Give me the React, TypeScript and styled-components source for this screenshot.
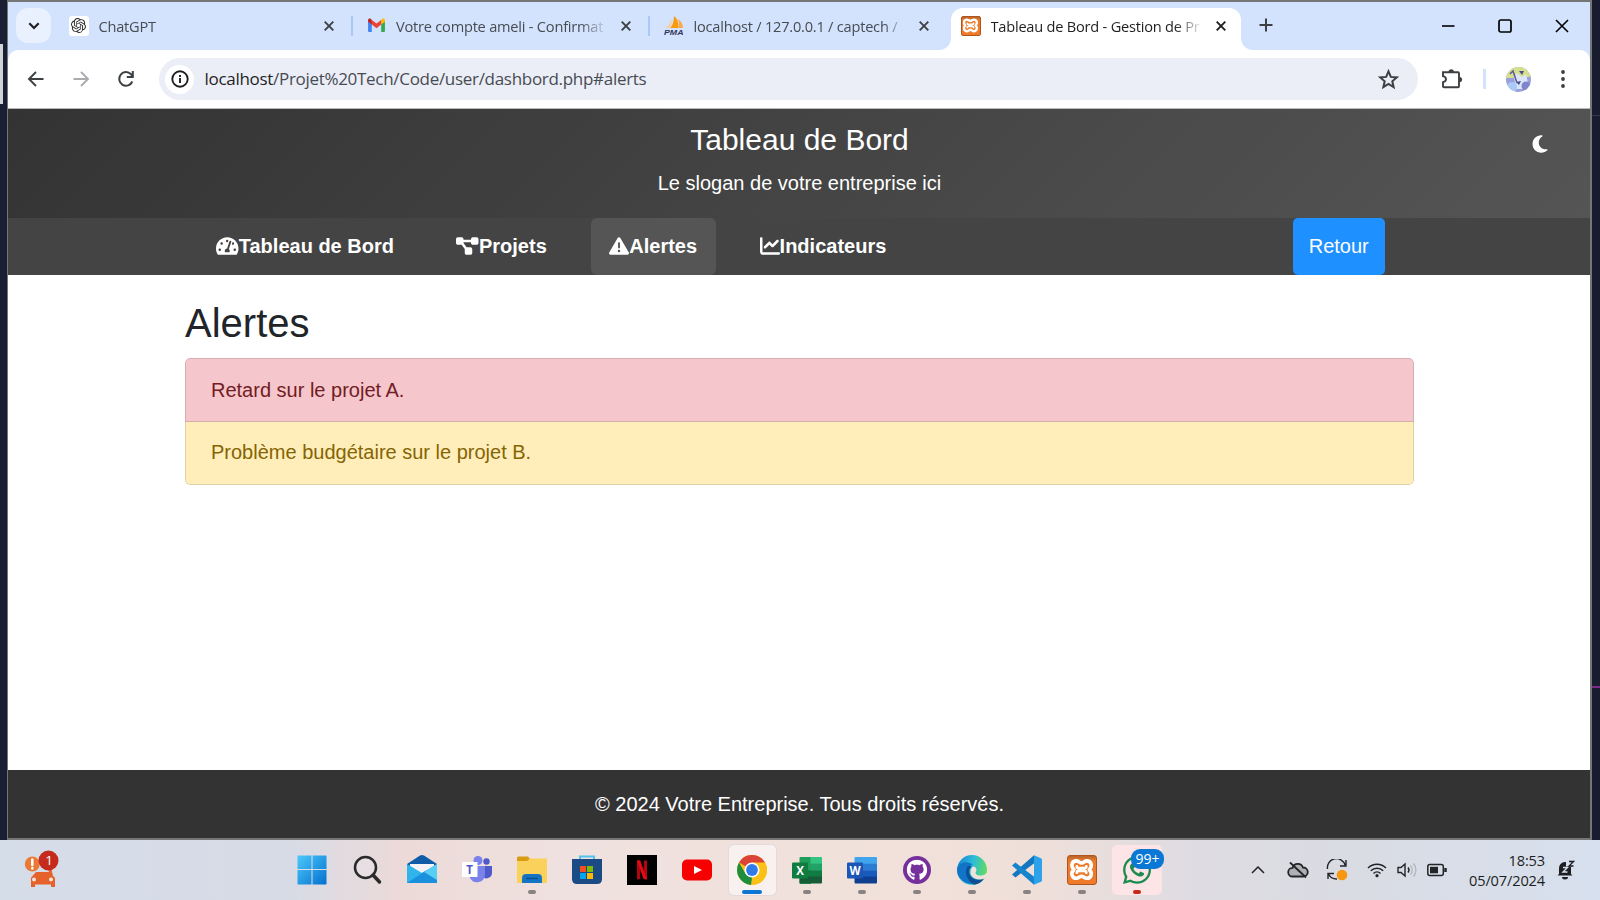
import React from "react";
import styled, { createGlobalStyle, css } from "styled-components";
import { SiOpenai } from "react-icons/si";
import { FaTachometerAlt, FaGithub, FaWhatsapp } from "react-icons/fa";
import { FaDiagramProject, FaTriangleExclamation, FaChartLine, FaMoon } from "react-icons/fa6";

const SEGOE = `"Open Sans", "Noto Sans", sans-serif`;
const ARIAL = `"Liberation Sans", Arial, sans-serif`;

const Global = createGlobalStyle`
  *, *::before, *::after { box-sizing: border-box; }
  body { margin: 0; background: #1b1e31; overflow: hidden; }
  svg { display: block; flex: none; }
`;

/* ---------- Desktop ---------- */
const Desktop = styled.div`
  display: flex;
  flex-direction: column;
  width: 1600px;
  height: 900px;
  font-family: ${SEGOE};
`;
const Workspace = styled.div`
  display: flex;
  height: 840px;
`;
const LeftEdge = styled.div`
  width: 7px;
  padding-top: 44px;
  background: #1a1e32;
`;
const LeftHandle = styled.div`
  width: 3px;
  height: 60px;
  background: #d0d4d8;
`;
const RightEdge = styled.div`
  flex: 1;
  padding-top: 115px;
  background: #191c2e;
`;
const EdgeLine = styled.div<{ $color: string; $gap?: number }>`
  height: ${(p) => (p.$gap ? 2 : 1)}px;
  margin-top: ${(p) => p.$gap ?? 0}px;
  background: ${(p) => p.$color};
`;
const BrowserWindow = styled.div`
  display: flex;
  flex-direction: column;
  width: 1585px;
  border: solid #757676;
  border-width: 2px 2px 2px 1px;
  background: #fff;
`;

/* ---------- Tab strip ---------- */
const TabStrip = styled.div`
  display: flex;
  height: 48px;
  padding-left: 8px;
  background: #d3e3fd;
`;
const TabSearch = styled.div`
  display: flex;
  align-items: center;
  justify-content: center;
  width: 35px;
  height: 35px;
  margin: 6px 4px 0 0;
  border-radius: 12px;
  background: #e9f0fe;
`;
const Tab = styled.div<{ $active?: boolean }>`
  position: relative;
  display: flex;
  align-items: center;
  width: 297.5px;
  height: 48px;
  padding: 0 0 1px 13.5px;
  color: #474b52;
  ${(p) =>
    p.$active &&
    css`
      width: 290px;
      height: 42px;
      margin: 6px 0 0 3px;
      padding: 0 0 7px 10px;
      border-radius: 12px 12px 0 0;
      background: #fff;
      color: #1f1f1f;
      &::before,
      &::after {
        content: "";
        position: absolute;
        bottom: 0;
        width: 12px;
        height: 12px;
      }
      &::before {
        left: -12px;
        background: radial-gradient(circle at 0 0, transparent 11.5px, #fff 12.5px);
      }
      &::after {
        right: -12px;
        background: radial-gradient(circle at 100% 0, transparent 11.5px, #fff 12.5px);
      }
    `}
`;
const Favicon = styled.div<{ $card?: boolean }>`
  display: flex;
  align-items: center;
  justify-content: center;
  width: 20px;
  height: 20px;
  margin-right: 10px;
  border-radius: 3px;
  background: ${(p) => (p.$card ? "#fff" : "transparent")};
  flex: none;
`;
const TabTitle = styled.div<{ $fade: number }>`
  width: 212px;
  margin-right: 13px;
  padding-top: 1px;
  white-space: nowrap;
  font-size: 14.6px;
  line-height: 22px;
  letter-spacing: -0.22px;
  mask-image: linear-gradient(90deg, #000 ${(p) => p.$fade}px, transparent 212px);
`;
const TabDivider = styled.div`
  width: 2px;
  height: 20px;
  margin-left: auto;
  background: #a8c7fa;
`;
const NewTab = styled.div`
  display: flex;
  align-items: center;
  margin-left: 18px;
  padding-bottom: 2px;
`;
const WindowButtons = styled.div`
  display: flex;
  align-items: center;
  gap: 43px;
  margin-left: auto;
  padding-right: 21px;
`;

/* ---------- Toolbar ---------- */
const ToolbarBack = styled.div`
  background: #d3e3fd;
`;
const Toolbar = styled.div`
  display: flex;
  align-items: center;
  height: 58px;
  padding: 0 24px 0 18px;
  border-radius: 10px 10px 0 0;
  background: #fff;
`;
const NavButtons = styled.div`
  display: flex;
  gap: 25px;
  width: 133px;
`;
const Omnibox = styled.div`
  display: flex;
  align-items: center;
  width: 1259px;
  height: 42px;
  padding: 0 19.5px 0 6px;
  border-radius: 21px;
  background: #ebeef7;
`;
const SiteInfo = styled.div`
  display: flex;
  align-items: center;
  justify-content: center;
  width: 29px;
  height: 29px;
  border-radius: 50%;
  background: #fff;
`;
const Url = styled.div`
  flex: 1;
  margin-left: 10.5px;
  color: #474b52;
  font-size: 17px;
  line-height: 24px;
  letter-spacing: -0.3px;
  white-space: nowrap;
`;
const Host = styled.span`
  color: #1f1f1f;
`;
const ToolbarRight = styled.div`
  display: flex;
  align-items: center;
  margin-left: auto;
`;
const ToolbarDivider = styled.div`
  width: 3px;
  height: 20px;
  margin: 0 20px;
  background: #d3e3fd;
`;
const MenuDots = styled.div`
  margin-left: 29px;
`;

/* ---------- Page ---------- */
const Page = styled.div`
  display: flex;
  flex: 1;
  flex-direction: column;
  border-top: 1px solid #b9baba;
  background: #fff;
  font-family: ${ARIAL};
  font-size: 20px;
  line-height: 30px;
`;
const Header = styled.header`
  position: relative;
  height: 109px;
  padding: 13px 0 0 1px;
  background: linear-gradient(135deg, #333, #555);
  color: #fff;
  text-align: center;
`;
const HeaderTitle = styled.h1`
  margin: 0 0 10px;
  font-size: 30px;
  font-weight: 400;
  line-height: 36px;
`;
const Slogan = styled.p`
  margin: 0;
`;
const ThemeToggle = styled.div`
  position: absolute;
  top: 25px;
  right: 40px;
`;
const NavBar = styled.nav`
  display: flex;
  gap: 25px;
  height: 57px;
  padding: 0 205px 0 189.5px;
  background: #444;
  color: #fff;
`;
const NavItem = styled.div<{ $active?: boolean }>`
  display: flex;
  align-items: center;
  padding: 0 18.75px 1px;
  border-radius: 6px;
  background: ${(p) => (p.$active ? "#555" : "transparent")};
  font-weight: 700;
`;
const BackButton = styled.div`
  display: flex;
  align-items: center;
  justify-content: center;
  width: 92.5px;
  margin-left: auto;
  padding-bottom: 1px;
  border-radius: 5px;
  background: #1e90ff;
`;
const Content = styled.main`
  flex: 1;
  padding: 24px 176px 0 177px;
`;
const Heading = styled.h2`
  margin: 0 0 11px;
  color: #212529;
  font-size: 40px;
  font-weight: 400;
  line-height: 48px;
`;
const AlertList = styled.div`
  overflow: hidden;
  border-radius: 5px;
`;
const AlertRow = styled.div<{ $kind: "danger" | "warning" }>`
  height: ${(p) => (p.$kind === "danger" ? 64 : 63)}px;
  padding: ${(p) => (p.$kind === "danger" ? 16 : 15)}px 25px 0;
  border: 1px solid rgba(0, 0, 0, 0.125);
  border-top-width: ${(p) => (p.$kind === "danger" ? 1 : 0)}px;
  border-radius: ${(p) => (p.$kind === "danger" ? "5px 5px 0 0" : "0 0 5px 5px")};
  background: ${(p) => (p.$kind === "danger" ? "#f5c6cb" : "#ffeeba")};
  color: ${(p) => (p.$kind === "danger" ? "#721c24" : "#856404")};
`;
const Footer = styled.footer`
  height: 68px;
  padding: 19px 0 0 1px;
  background: #333;
  color: #fff;
  text-align: center;
`;

/* ---------- Taskbar ---------- */
const Taskbar = styled.div`
  display: flex;
  align-items: center;
  height: 60px;
  background: linear-gradient(
    90deg,
    #d5dde9 0,
    #d7dbe6 290px,
    #ecdad8 400px,
    #efe1df 560px,
    #f1e1da 900px,
    #efdfd9 1040px,
    #dedce2 1190px,
    #dadbe2 1320px,
    #d7e0ee 1600px
  );
`;
const Widget = styled.div`
  width: 260px;
  padding: 0 0 5px 24px;
`;
const Apps = styled.div`
  display: flex;
  margin-left: 24.5px;
  width: 880px;
`;
const AppCell = styled.div`
  display: flex;
  justify-content: center;
  width: 55px;
`;
const AppTile = styled.div<{ $tile?: "active" | "alert" }>`
  position: relative;
  display: flex;
  flex-direction: column;
  align-items: center;
  width: ${(p) => (p.$tile === "alert" ? 50 : 47)}px;
  height: 50px;
  padding-top: 10px;
  border-radius: 5px;
  background: ${(p) => (p.$tile === "active" ? "#f8f1ef" : p.$tile === "alert" ? "#fde4e6" : "transparent")};
  box-shadow: ${(p) => (p.$tile === "active" ? "0 0 1px 1px #e6d9d7" : "none")};
`;
const Indicator = styled.div<{ $color: string; $wide?: boolean }>`
  width: ${(p) => (p.$wide ? 20 : 8)}px;
  height: 4px;
  margin-top: 5px;
  border-radius: 2px;
  background: ${(p) => p.$color};
`;
const CountBadge = styled.div`
  position: absolute;
  top: 4px;
  left: 19px;
  width: 33px;
  height: 20px;
  border-radius: 9px;
  background: #0a78d4;
  color: #fff;
  font-size: 14px;
  line-height: 20px;
  text-align: center;
`;
const Tray = styled.div`
  display: flex;
  align-items: center;
  margin-left: auto;
  padding-right: 25px;
`;
const TrayIcon = styled.div<{ $w: number; $gap: number }>`
  width: ${(p) => p.$w}px;
  margin-right: ${(p) => p.$gap}px;
`;
const Clock = styled.div`
  width: 91px;
  margin-right: 12px;
  color: #1c1e22;
  font-size: 14.6px;
  line-height: 20px;
  letter-spacing: -0.15px;
  text-align: right;
`;

/* ---------- Small drawings ---------- */
const Cross = ({ s = 10, w = 1.9, c = "#3c4043" }) => (
  <svg width={s} height={s} viewBox="0 0 10 10" fill="none" stroke={c} strokeWidth={w}>
    <path d="M.7.7l8.6 8.6M9.3.7L.7 9.3" />
  </svg>
);
const GmailIcon = () => (
  <svg width="19" height="15" viewBox="0 0 20 16">
    <path d="M1 3v10.5c0 .8.5 1.3 1.3 1.3H5V6z" fill="#4285f4" />
    <path d="M19 3v10.5c0 .8-.5 1.3-1.300 1.3H15V6z" fill="#34a853" />
    <path d="M15 2v5l4-3V2.500C19 .8 17.200.2 16 1z" fill="#fbbc04" />
    <path d="M5 7V2l5 3.800L15 2v5l-5 3.800z" fill="#ea4335" />
    <path d="M1 2.500V4l4 3V2L4 1C2.800.2 1 .8 1 2.500z" fill="#c5221f" />
  </svg>
);
const PmaIcon = () => (
  <svg width="20" height="20" viewBox="0 0 20 20">
    <path d="M7.500 2v10H1.500C4.500 10 6.500 6 7.500 2z" fill="#f7cfa6" />
    <path d="M10 0c4 3 5 8 4.500 12H6.500c2.500-3 3.500-8 3.500-12z" fill="#f89c0e" />
    <path d="M14 3c3.500 2 5 5.500 5 9h-4.500c1-3 .8-6-.5-9z" fill="#fba94a" />
    <text x="0" y="19" fontFamily={ARIAL} fontSize="7.5" fontWeight="700" fontStyle="italic" fill="#33335c" textLength="19.5" lengthAdjust="spacingAndGlyphs">
      PMA
    </text>
  </svg>
);
const XamppBox = styled.div<{ $s: number }>`
  display: flex;
  align-items: center;
  justify-content: center;
  width: ${(p) => p.$s}px;
  height: ${(p) => p.$s}px;
  border: 1px solid #b0561a;
  border-radius: ${(p) => p.$s / 10}px;
  background: linear-gradient(#b9622a, #d9772f 12%, #ee7b2b 22%, #ee7b2b);
  flex: none;
`;
const XamppIcon = ({ s }: { s: number }) => (
  <XamppBox $s={s}>
    <svg width={s * 0.84} height={s * 0.84} viewBox="0 0 24 24" fill="none" strokeLinejoin="round">
      <path
        d="M4.700 12C1 8.500 3 3.700 7 3.700c2.300 0 3 2 5 2s2.700-2 5-2c4 0 6 4.800 2.300 8.300 3.700 3.500 1.700 8.300-2.300 8.300-2.300 0-3-2-5-2s-2.700 2-5 2c-4 0-6-4.800-2.300-8.300z"
        stroke="#fff"
        strokeWidth="3.4"
      />
      <path d="M7.500 9c0 1.200.8 1.700 2 1.700h5c1.200 0 2-.5 2-1.700M7.500 15c0-1.200.8-1.700 2-1.700h5c1.200 0 2 .5 2 1.700" stroke="#fff" strokeWidth="2.600" strokeLinecap="round" />
    </svg>
  </XamppBox>
);
const InfoIcon = () => (
  <svg width="18" height="18" viewBox="0 0 18 18" fill="none" stroke="#1f1f1f" strokeWidth="1.900">
    <circle cx="9" cy="9" r="7.700" />
    <path d="M9 8v5M9 5v2" />
  </svg>
);
const Arrow = ({ c, flip }: { c: string; flip?: boolean }) => (
  <svg width="20" height="20" viewBox="0 0 20 20" fill="none" stroke={c} strokeWidth="1.900" transform={flip ? "scale(-1 1)" : undefined}>
    <path d="M17.500 10H3.500M10 3l-7 7 7 7" />
  </svg>
);
const Reload = () => (
  <svg width="20" height="20" viewBox="0 0 20 20" fill="none" stroke="#3c4043" strokeWidth="2">
    <path d="M16.300 12.500a6.800 6.800 0 1 1-1.300-7.200l2 2.200" />
    <path d="M16.800 2v6h-6" />
  </svg>
);
const Star = () => (
  <svg width="21" height="21" viewBox="0 0 20 20" fill="none" stroke="#3c4043" strokeWidth="1.900">
    <path d="M10 2.200l2.200 5.300 5.700.5-4.300 3.700 1.300 5.600-4.900-3-4.900 3 1.300-5.600L2.100 8l5.700-.5z" />
  </svg>
);
const Puzzle = () => (
  <svg width="22" height="22" viewBox="0 0 22 22">
    <path d="M2 4.200h15a1 1 0 0 1 1 1v13a1 1 0 0 1-1 1H3a1 1 0 0 1-1-1v-4c4-1 4-5 0-6z" fill="none" stroke="#3c4043" strokeWidth="1.900" />
    <path d="M7.500 4a2.700 2.700 0 0 1 5.400 0zM18.500 9a2.600 2.600 0 0 1 0 5.200z" fill="#3c4043" />
  </svg>
);
const Avatar = () => (
  <svg width="25" height="25" viewBox="0 0 25 25">
    <clipPath id="avatar"><circle cx="12.500" cy="12.500" r="12.500" /></clipPath>
    <g clipPath="url(#avatar)">
      <path d="M0 0h25v25H0z" fill="#9aa0dc" />
      <path d="M0 0h25v9l-6 2H0z" fill="#d5df8c" />
      <path d="M8 10l3-4 5 4 4-3 2 9-5 6h-7z" fill="#dce4f7" />
      <circle cx="6" cy="20" r="5" fill="#a9c9f6" />
      <circle cx="20" cy="19" r="4.500" fill="#7f85cc" />
      <path d="M4 7l3-3 4 12" fill="none" stroke="#5a5a9a" strokeWidth="1.500" />
      <path d="M13 4h5l-2 4zM10 15l5-1-2 4z" fill="#4c4c95" />
    </g>
  </svg>
);
const TrafficIcon = () => (
  <svg width="38" height="40" viewBox="0 0 38 40">
    <path d="M8.500 28l3.500-4h13L22 15h4l3 13q2.500 1 2 5v6h-4v-2.500H11V39H7v-6q-.5-4 1.500-5z" fill="#e5622a" />
    <circle cx="10" cy="31.500" r="2" fill="#f7e4dc" />
    <circle cx="27" cy="31.500" r="2" fill="#f7e4dc" />
    <circle cx="8.300" cy="16" r="7.500" fill="#eb7935" />
    <path d="M8.300 11.500v5.500M8.300 20v.6" stroke="#fff" strokeWidth="2.500" strokeLinecap="round" />
    <circle cx="24.500" cy="12.500" r="10" fill="#c42b1c" />
    <text x="25" y="17" textAnchor="middle" fontFamily={SEGOE} fontSize="13.500" fill="#fff">1</text>
  </svg>
);
const Svg30 = ({ children }: { children: React.ReactNode }) => (
  <svg width="30" height="30" viewBox="0 0 30 30">{children}</svg>
);
const StartIcon = () => (
  <Svg30>
    <linearGradient id="win" x1="0" y1="0" x2="1" y2="1" gradientUnits="objectBoundingBox">
      <stop offset="0" stopColor="#4cc9fb" /><stop offset="1" stopColor="#0470cf" />
    </linearGradient>
    <path d="M1 .5h13.500V14H.5V1zM15.500.5H29l.5.5v13h-14zM.5 15h14v14.500H1L.5 29zM15.500 15h14v14l-.5.5H15.500z" fill="url(#win)" />
  </Svg30>
);
const SearchIcon = () => (
  <Svg30>
    <circle cx="13.500" cy="12.500" r="10.500" fill="#e7dfe3" stroke="#2b2a2b" strokeWidth="2.500" />
    <path d="M21 20l6.500 7" stroke="#2b2a2b" strokeWidth="3.500" strokeLinecap="round" />
  </Svg30>
);
const MailIcon = () => (
  <Svg30>
    <path d="M0 9L13 .6q2-1.200 4 0L30 9v6H0z" fill="#0f5ba8" />
    <path d="M3 9h24v10H3z" fill="#f4f2f4" />
    <path d="M0 9l15 9L30 9v19H0z" fill="#2fb4ec" />
    <path d="M0 28L19 15.500 30 24v4z" fill="#1b90dc" />
    <path d="M30 9v16L17 17z" fill="#57cff5" />
  </Svg30>
);
const TeamsIcon = () => (
  <Svg30>
    <circle cx="16" cy="5.500" r="4.500" fill="#7b83eb" />
    <circle cx="24.500" cy="6.500" r="3.200" fill="#5059c9" />
    <path d="M20 11h10v7a5.500 5.500 0 0 1-10 3z" fill="#5059c9" />
    <path d="M9 11h14v9a8 8 0 0 1-15 3z" fill="#7b83eb" />
    <path d="M0 7h15.500v15H0z" fill="#fff" />
    <text x="7.700" y="18.800" textAnchor="middle" fontFamily={SEGOE} fontWeight="700" fontSize="11.500" fill="#5059c9">T</text>
  </Svg30>
);
const FolderIcon = () => (
  <Svg30>
    <path d="M0 3q0-1.500 1.500-1.500H11L13 4v5H0z" fill="#d89b14" />
    <path d="M0 6h10l3-2.500h17V27q0 1-1 1H1q-1 0-1-1z" fill="#fad15a" />
    <path d="M5 28v-5q0-4 4-4h12q4 0 4 4v5z" fill="#1474c4" />
    <path d="M9 23.500h12" stroke="#0b4f91" strokeWidth="1.500" />
  </Svg30>
);
const StoreIcon = () => (
  <Svg30>
    <path d="M8 6V1.500h14V6" fill="none" stroke="#50c3ee" strokeWidth="2" />
    <path d="M0 4h30v20q0 5-5 5H5q-5 0-5-5z" fill="#1a4b84" />
    <path d="M8 11h6v6H8z" fill="#f25022" /><path d="M15 11h6v6h-6z" fill="#7fba00" />
    <path d="M8 18h6v6H8z" fill="#00a4ef" /><path d="M15 18h6v6h-6z" fill="#ffb900" />
  </Svg30>
);
const NetflixIcon = () => (
  <Svg30>
    <path d="M0 0h30v30H0z" fill="#000" />
    <path d="M10 5.500h3.200V24l-3.200.5zM16.800 5.500H20v19l-3.200-.5z" fill="#b1060f" />
    <path d="M10 5.500h3.200L20 24.500l-3.400-.5z" fill="#e50914" />
  </Svg30>
);
const YoutubeIcon = () => (
  <Svg30>
    <rect y="4.500" width="30" height="21" rx="5" fill="#f60000" />
    <path d="M12 11l8 4-8 4z" fill="#fff" />
  </Svg30>
);
const ChromeIcon = () => (
  <Svg30>
    <circle cx="15" cy="15" r="15" fill="#fbc116" />
    <path d="M15 15L2 7.500a15 15 0 0 1 26 0z" fill="#db4437" />
    <path d="M2 7.500l6.500 11.200L15 22.500l-1 7.400A15 15 0 0 1 2 7.500z" fill="#1e8e3e" />
    <path d="M28 7.500H15v7.500l6.500 3.700L15 30a15 15 0 0 0 13-22.500z" fill="#fbc116" />
    <circle cx="15" cy="15" r="7.500" fill="#fff" />
    <circle cx="15" cy="15" r="5.900" fill="#2f7be8" />
  </Svg30>
);
const WordIcon = () => (
  <Svg30>
    <path d="M7.500 3q0-1 1-1H29q1 0 1 1v6H7.500z" fill="#41a5ee" />
    <path d="M7.500 8.700H30v7H7.500z" fill="#2b7cd3" />
    <path d="M7.500 15.300H30v7H7.500z" fill="#185abd" />
    <path d="M7.500 21.500H30v6q0 1-1 1H8.500q-1 0-1-1z" fill="#103f91" />
    <rect x="0" y="7.500" width="16" height="16" rx="1" fill="#1b55b5" />
    <text x="8" y="19.800" textAnchor="middle" fontFamily={SEGOE} fontWeight="700" fontSize="11.500" fill="#fff">W</text>
  </Svg30>
);
const ExcelIcon = () => (
  <Svg30>
    <path d="M7.500 3q0-1 1-1H19v27H8.500q-1 0-1-1z" fill="#1f9d5b" />
    <path d="M18.500 2H29q1 0 1 1v6H18.500z" fill="#33c481" />
    <path d="M18.500 8.700H30v7H18.500z" fill="#21a366" />
    <path d="M7.500 15.300h11v7h-11zM18.500 15.300H30v7H18.500z" fill="#107c41" />
    <path d="M7.500 21.500H30v6q0 1-1 1H8.500q-1 0-1-1z" fill="#185c37" />
    <rect x="0" y="7.500" width="16" height="16" rx="1" fill="#107c41" />
    <text x="8" y="19.800" textAnchor="middle" fontFamily={SEGOE} fontWeight="700" fontSize="11.500" fill="#fff">X</text>
  </Svg30>
);
const GithubDesktopIcon = () => (
  <Svg30>
    <circle cx="15" cy="15" r="14" fill="#76309b" />
    <FaGithub x={4.5} y={4.5} size={21} color="#fff" />
  </Svg30>
);
const EdgeIcon = () => (
  <Svg30>
    <linearGradient id="edgeTop" x1="0" y1=".3" x2="1" y2=".5">
      <stop offset="0" stopColor="#1585d3" /><stop offset=".5" stopColor="#2dbcd8" /><stop offset="1" stopColor="#62dd5c" />
    </linearGradient>
    <circle cx="15" cy="15" r="15" fill="url(#edgeTop)" />
    <path d="M0 14C2 7 11 5 16 10c-5 0-7 5-4 10 3 5 10 6 15 3A15 15 0 0 1 0 14z" fill="#1274c7" />
    <path d="M11 11c-4 5-2 14 6 18.800A15 15 0 0 0 27.500 23c-5 3-12 2-14.500-3-1.500-4-.5-7 2-9z" fill="#0d4f95" />
    <path d="M16 11.500c3 0 4 3 3 5-1.500 2 1 4.500 5 4 3 0 5-1.500 6-3v4l-2.500 2c-6 2.500-14-.5-14-6 0-3 1-5 2.500-6z" fill="#efe2dc" />
  </Svg30>
);
const VsCodeIcon = () => (
  <Svg30>
    <path d="M22 .3L0 19.500l3.500 3L22.500 8z" fill="#1277be" />
    <path d="M22 29.700L0 10.500l3.500-3L22.500 22z" fill="#1584cc" />
    <path d="M22 .3l7 3q1 .5 1 1.500v20.400q0 1-1 1.500l-7 3z" fill="#2da2ea" />
  </Svg30>
);
const WhatsappIcon = () => (
  <svg width="32" height="30" viewBox="0 0 32 30">
    <FaWhatsapp x={0} y={-1} size={32} color="#1d8a4e" />
  </svg>
);

/* ---------- Tray drawings ---------- */
const stroke = { fill: "none", stroke: "#222428", strokeWidth: 1.5 };
const ChevronUp = () => (
  <svg width="14" height="8" viewBox="0 0 14 8" {...stroke}><path d="M1 7l6-6 6 6" /></svg>
);
const CloudOff = () => (
  <svg width="22" height="18" viewBox="0 0 22 18" {...stroke} strokeWidth="1.800">
    <path d="M5.500 15.500a4.300 4.300 0 0 1 0-8.600A5.500 5.500 0 0 1 16 6.500a4.500 4.500 0 0 1 .5 9z" fill="#b0b0b4" />
    <path d="M3 1.500l16 15" />
  </svg>
);
const SyncIcon = () => (
  <svg width="22" height="22" viewBox="0 0 22 22" {...stroke} strokeWidth="1.400">
    <path d="M1.500 10A9 9 0 0 1 19 6M20 1v6h-6M2 20v-5.500h6M2.500 15A9 9 0 0 0 11 20" />
    <circle cx="16" cy="16" r="5.300" fill="#f7960f" stroke="none" />
  </svg>
);
const WifiIcon = () => (
  <svg width="20" height="16" viewBox="0 0 20 16" {...stroke}>
    <path d="M1 6a12.600 12.600 0 0 1 18 0M3.800 8.800a8.800 8.800 0 0 1 12.400 0M6.500 11.500a5 5 0 0 1 7 0" />
    <circle cx="10" cy="13.700" r="1.600" fill="#222428" stroke="none" />
  </svg>
);
const VolumeIcon = () => (
  <svg width="21" height="16" viewBox="0 0 21 16" {...stroke} strokeWidth="1.400">
    <path d="M1 5.500h3L8 2v12l-4-3.500H1z" />
    <path d="M11 5.500a4 4 0 0 1 0 5" />
    <path d="M13.500 3.500a7 7 0 0 1 0 9M16.500 1.500a10 10 0 0 1 0 13" stroke="#b4b6bc" />
  </svg>
);
const BatteryIcon = () => (
  <svg width="20" height="14" viewBox="0 0 20 14" {...stroke}>
    <rect x=".8" y="1.500" width="15.500" height="11" rx="2" />
    <path d="M3 3.800h8v6.500H3z" fill="#222428" stroke="none" />
    <path d="M18.500 5v4" strokeWidth="2.500" />
  </svg>
);
const BellIcon = () => (
  <svg width="18" height="20" viewBox="0 0 18 20">
    <path d="M2 14V8.500a6 6 0 0 1 6-6.500h1v4.500h5V14l1.500 1.500H.5zM5 17h6a3 2.500 0 0 1-6 0z" fill="#1c1e22" />
    <path d="M6 7.500h4.500L6 12h4.500" fill="none" stroke="#d9dfea" strokeWidth="1.400" />
    <path d="M12 1.500h4.500L12 6h4.500" fill="none" stroke="#1c1e22" strokeWidth="1.300" />
  </svg>
);

const GRAY = "#8a8280";
type AppEntry = { icon: React.ReactNode; dot?: string; tile?: "active" | "alert"; badge?: string };
const apps: AppEntry[] = [
  { icon: <StartIcon /> },
  { icon: <SearchIcon /> },
  { icon: <MailIcon /> },
  { icon: <TeamsIcon /> },
  { icon: <FolderIcon />, dot: GRAY },
  { icon: <StoreIcon /> },
  { icon: <NetflixIcon /> },
  { icon: <YoutubeIcon /> },
  { icon: <ChromeIcon />, dot: "#0a78d4", tile: "active" },
  { icon: <ExcelIcon />, dot: GRAY },
  { icon: <WordIcon />, dot: GRAY },
  { icon: <GithubDesktopIcon />, dot: GRAY },
  { icon: <EdgeIcon />, dot: GRAY },
  { icon: <VsCodeIcon />, dot: GRAY },
  { icon: <XamppIcon s={30} />, dot: GRAY },
  { icon: <WhatsappIcon />, dot: "#c42b1c", tile: "alert", badge: "99+" },
];

const tabs = [
  { title: "ChatGPT", icon: <SiOpenai size={15} color="#2a2a2a" />, card: true, fade: 188 },
  { title: "Votre compte ameli - Confirmat", icon: <GmailIcon />, fade: 184 },
  { title: "localhost / 127.0.0.1 / captech /", icon: <PmaIcon />, fade: 190 },
  { title: "Tableau de Bord - Gestion de Pr", icon: <XamppIcon s={20} />, active: true, fade: 184 },
];

export default function App() {
  return (
    <Desktop>
      <Global />
      <Workspace>
        <LeftEdge><LeftHandle /></LeftEdge>
        <BrowserWindow>
          <TabStrip>
            <TabSearch>
              <svg width="12" height="8" viewBox="0 0 12 8" fill="none" stroke="#1f1f1f" strokeWidth="2.200"><path d="M1.300 1.300L6 6l4.700-4.700" /></svg>
            </TabSearch>
            {tabs.map((t, i) => (
              <Tab key={t.title} $active={t.active}>
                <Favicon $card={t.card}>{t.icon}</Favicon>
                <TabTitle $fade={t.fade}>{t.title}</TabTitle>
                <Cross c={t.active ? "#1f1f1f" : undefined} />
                {i < 2 && <TabDivider />}
              </Tab>
            ))}
            <NewTab>
              <svg width="14" height="14" viewBox="0 0 14 14" stroke="#3c4043" strokeWidth="2"><path d="M7 .5v13M.5 7h13" /></svg>
            </NewTab>
            <WindowButtons>
              <svg width="14" height="14" viewBox="0 0 14 14" stroke="#000" strokeWidth="1.600"><path d="M1 7h12.500" /></svg>
              <svg width="14" height="14" viewBox="0 0 14 14" fill="none" stroke="#000" strokeWidth="1.700"><rect x="1" y="1" width="12" height="12" rx="1.800" /></svg>
              <Cross s={14} w={1.15} c="#000" />
            </WindowButtons>
          </TabStrip>
          <ToolbarBack>
            <Toolbar>
              <NavButtons>
                <Arrow c="#3c4043" />
                <Arrow c="#a9abae" flip />
                <Reload />
              </NavButtons>
              <Omnibox>
                <SiteInfo><InfoIcon /></SiteInfo>
                <Url><Host>localhost</Host>/Projet%20Tech/Code/user/dashbord.php#alerts</Url>
                <Star />
              </Omnibox>
              <ToolbarRight>
                <Puzzle />
                <ToolbarDivider />
                <Avatar />
                <MenuDots>
                  <svg width="6" height="20" viewBox="0 0 6 20" fill="#3c4043"><circle cx="3" cy="3" r="1.900" /><circle cx="3" cy="10" r="1.900" /><circle cx="3" cy="17" r="1.900" /></svg>
                </MenuDots>
              </ToolbarRight>
            </Toolbar>
          </ToolbarBack>
          <Page>
            <Header>
              <HeaderTitle>Tableau de Bord</HeaderTitle>
              <Slogan>Le slogan de votre entreprise ici</Slogan>
              <ThemeToggle><FaMoon size={20} /></ThemeToggle>
            </Header>
            <NavBar>
              <NavItem><FaTachometerAlt style={{ width: 22.5, height: 20 }} />Tableau de Bord</NavItem>
              <NavItem><FaDiagramProject style={{ width: 22.5, height: 20 }} />Projets</NavItem>
              <NavItem $active><FaTriangleExclamation size={20} />Alertes</NavItem>
              <NavItem><FaChartLine size={20} />Indicateurs</NavItem>
              <BackButton>Retour</BackButton>
            </NavBar>
            <Content>
              <Heading>Alertes</Heading>
              <AlertList>
                <AlertRow $kind="danger">Retard sur le projet A.</AlertRow>
                <AlertRow $kind="warning">Problème budgétaire sur le projet B.</AlertRow>
              </AlertList>
            </Content>
            <Footer>© 2024 Votre Entreprise. Tous droits réservés.</Footer>
          </Page>
        </BrowserWindow>
        <RightEdge>
          <EdgeLine $color="#34384e" />
          <EdgeLine $color="#7a2a8c" $gap={570} />
        </RightEdge>
      </Workspace>
      <Taskbar>
        <Widget><TrafficIcon /></Widget>
        <Apps>
          {apps.map((a, i) => (
            <AppCell key={i}>
              <AppTile $tile={a.tile}>
                {a.icon}
                {a.dot && <Indicator $color={a.dot} $wide={a.tile === "active"} />}
                {a.badge && <CountBadge>{a.badge}</CountBadge>}
              </AppTile>
            </AppCell>
          ))}
        </Apps>
        <Tray>
          <TrayIcon $w={14} $gap={22}><ChevronUp /></TrayIcon>
          <TrayIcon $w={22} $gap={17}><CloudOff /></TrayIcon>
          <TrayIcon $w={22} $gap={19}><SyncIcon /></TrayIcon>
          <TrayIcon $w={20} $gap={10}><WifiIcon /></TrayIcon>
          <TrayIcon $w={21} $gap={9}><VolumeIcon /></TrayIcon>
          <TrayIcon $w={20} $gap={7}><BatteryIcon /></TrayIcon>
          <Clock>18:53<br />05/07/2024</Clock>
          <BellIcon />
        </Tray>
      </Taskbar>
    </Desktop>
  );
}
